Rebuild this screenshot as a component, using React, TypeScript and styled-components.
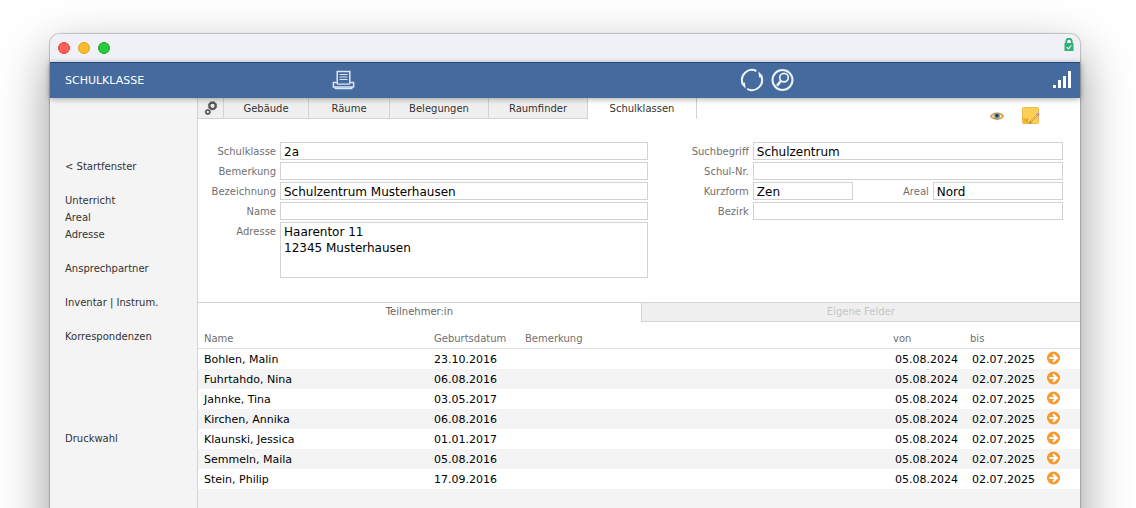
import React from "react";
import styled, { createGlobalStyle } from "styled-components";

const GlobalStyle = createGlobalStyle`
  *, *::before, *::after { box-sizing: border-box; }
  body {
    margin: 0;
    background: #fff;
    font-family: "DejaVu Sans", Verdana, sans-serif;
    font-size: 10px;
    color: #333;
  }
  button, input, textarea { font: inherit; color: inherit; }
  button { margin: 0; padding: 0; border: 0; background: none; cursor: pointer; }
  svg { display: block; }
`;

const line = "#d3d3d3";

const Desktop = styled.div`
  height: 100vh;
  padding: 34px 56px 0 50px;
  overflow: hidden;
`;

const Window = styled.div`
  display: flex;
  flex-direction: column;
  min-height: calc(100% + 60px);
  border-radius: 10px;
  background: #f4f4f4;
  box-shadow: 0 0 1px 1px rgba(0, 0, 0, 0.2), 0 20px 50px rgba(0, 0, 0, 0.42);
`;

const TitleBar = styled.div`
  display: flex;
  justify-content: space-between;
  align-items: flex-start;
  height: 28px;
  padding: 4px 6px 0 8px;
  border-radius: 10px 10px 0 0;
  background: #f0f1f6;
`;

const Lights = styled.div`
  display: flex;
  gap: 8px;
  padding-top: 4px;
`;

const Light = styled.button<{ $fill: string; $edge: string }>`
  width: 12px;
  height: 12px;
  border: 1px solid ${(p) => p.$edge};
  border-radius: 50%;
  background: ${(p) => p.$fill};
`;

const Header = styled.header`
  position: relative;
  display: flex;
  align-items: center;
  height: 36px;
  padding: 0 8px 2px 15px;
  border-top: 1px solid #24487c;
  background: #456a9d;
  box-shadow: 0 1px 6px rgba(0, 0, 0, 0.35);
`;

const Title = styled.h1`
  width: 267px;
  margin: 0;
  padding-top: 2px;
  font-size: 11px;
  font-weight: 400;
  color: #fff;
`;

const HeaderTools = styled.div`
  display: flex;
  align-items: center;
  gap: 6px;
  width: 332px;
  margin-left: auto;
`;

const IconButton = styled.button<{ $end?: boolean }>`
  margin-left: ${(p) => (p.$end ? "auto" : "0")};
`;

const Body = styled.div`
  flex: 1;
  display: flex;
`;

const Sidebar = styled.nav`
  flex: none;
  display: flex;
  flex-direction: column;
  gap: 17px;
  width: 148px;
  padding: 60px 0 60px 15px;
  border-right: 1px solid ${line};
`;

const NavGroup = styled.div<{ $apart?: boolean }>`
  display: flex;
  flex-direction: column;
  align-items: flex-start;
  padding-top: ${(p) => (p.$apart ? "68px" : "0")};
`;

const NavLink = styled.a`
  line-height: 17px;
  color: #333;
  text-decoration: none;
`;

const Main = styled.main`
  flex: 1;
  min-width: 0;
`;

const Sheet = styled.section`
  background: #fff;
`;

const TopRow = styled.div`
  display: flex;
  justify-content: space-between;
  align-items: flex-start;
  height: 44px;
`;

const Tabs = styled.div`
  display: flex;
`;

const Tab = styled.button<{ $width: number; $active?: boolean }>`
  display: flex;
  justify-content: center;
  align-items: center;
  width: ${(p) => p.$width}px;
  height: 21px;
  border-right: 1px solid ${line};
  border-bottom: 1px solid ${(p) => (p.$active ? "#fff" : line)};
  background: ${(p) => (p.$active ? "#fff" : "#efefef")};
`;

const Actions = styled.div`
  display: flex;
  align-items: center;
  gap: 18px;
  padding: 9px 40px 0 0;
`;

const Form = styled.form`
  display: grid;
  grid-template-columns: minmax(0, 13fr) minmax(0, 12fr);
  min-height: 160px;
  padding-right: 17px;
`;

const Fields = styled.div`
  display: flex;
  flex-direction: column;
  gap: 2px;
`;

const FieldRow = styled.div`
  display: flex;
  gap: 4px;
`;

const Label = styled.label<{ $width: number }>`
  flex: none;
  width: ${(p) => p.$width}px;
  height: 18px;
  line-height: 20px;
  text-align: right;
  color: #707070;
`;

const Input = styled.input<{ $width?: number }>`
  flex: ${(p) => (p.$width ? `0 0 ${p.$width}px` : "1 1 0")};
  min-width: 0;
  height: 18px;
  padding: 1px 3px 0;
  border: 1px solid ${line};
  background: #fff;
  font-size: 12px;
  color: #000;
`;

const TextArea = styled.textarea`
  flex: 1;
  min-width: 0;
  height: 56px;
  padding: 1px 3px;
  border: 1px solid ${line};
  background: #fff;
  font-size: 12px;
  line-height: 16px;
  color: #000;
  resize: none;
`;

const SubTabs = styled.div`
  display: flex;
  border-top: 1px solid ${line};
`;

const SubTab = styled.button<{ $active?: boolean }>`
  flex: ${(p) => (p.$active ? "101 1 0" : "100 1 0")};
  height: 19px;
  padding-bottom: ${(p) => (p.$active ? "2px" : "1px")};
  border: 0 solid ${line};
  border-width: ${(p) => (p.$active ? "0" : "0 0 1px 1px")};
  background: ${(p) => (p.$active ? "#fff" : "#efefef")};
  color: ${(p) => (p.$active ? "#666" : "#c6c6c6")};
`;

const Table = styled.table`
  width: 100%;
  table-layout: fixed;
  border-collapse: separate;
  border-spacing: 0;
`;

const Col = styled.col<{ $width?: number }>`
  width: ${(p) => (p.$width ? `${p.$width}px` : "auto")};
`;

const HeadCell = styled.th<{ $date?: boolean }>`
  height: 27px;
  padding: 7px 0 0 ${(p) => (p.$date ? "4px" : "6px")};
  border-bottom: 1px solid #e0e0e0;
  font-weight: 400;
  text-align: left;
  color: #707070;
`;

const Row = styled.tr`
  background: #fff;
  &:nth-child(even) { background: #f4f4f4; }
`;

const Cell = styled.td`
  height: 20px;
  padding: 2px 0 0 6px;
  font-size: 11px;
  line-height: 18px;
  color: #000;
`;

const IconCell = styled(Cell)`
  padding-top: 0;
  padding-bottom: 2px;
  line-height: 0;
`;

const LockIcon = () => (
  <svg width="10" height="14" viewBox="0 0 10 14" aria-label="Gesichert" role="img">
    <path d="M2.200 6V3.600a2.800 2.800 0 0 1 5.600 0V6" fill="none" stroke="#2fb075" strokeWidth="1.700" />
    <rect x="0.500" y="5" width="9" height="8" fill="#2fb075" />
    <path d="M2.800 9.200l1.600 1.700 3-3.400" fill="none" stroke="#fff" strokeWidth="1.100" />
  </svg>
);

const PrinterIcon = () => (
  <svg width="23" height="20" viewBox="0 0 23 20" fill="none" stroke="#dce6f3" strokeWidth="1.500">
    <path d="M5.200 13V1.500h12.600V13" />
    <path d="M7.500 4.500h8M7.500 7h8M7.500 9.500h8" strokeWidth="1.100" />
    <path d="M4.500 12.500H1.400v4.400h20.200v-4.400H18.500" />
    <path d="M4.500 12.700l1.300 1.400h11.400l1.300-1.400" strokeWidth="1.300" />
    <path d="M3.300 17v1.600h16.400V17" />
  </svg>
);

const RefreshIcon = () => (
  <svg width="24" height="24" viewBox="0 0 24 24" fill="none" stroke="#eef3fa" strokeWidth="2">
    <path d="M16.400 3A10 10 0 0 0 2.600 15.400" />
    <path d="M21 7.800A10 10 0 0 1 7.200 20.900" />
    <path d="M18.400 3.200l.6 6.400 4.200-1z" fill="#eef3fa" stroke="none" />
    <path d="M5.600 20.800l-.6-6.400-4.200 1z" fill="#eef3fa" stroke="none" />
  </svg>
);

const SearchIcon = () => (
  <svg width="24" height="24" viewBox="0 0 24 24" fill="none" stroke="#eef3fa">
    <circle cx="12.500" cy="12" r="10" strokeWidth="2" />
    <circle cx="14" cy="9.600" r="4.300" strokeWidth="1.700" />
    <path d="M11 12.800l-4 5" strokeWidth="2.500" />
  </svg>
);

const SignalIcon = () => (
  <svg width="20" height="18" viewBox="0 0 20 18" fill="#fff">
    <rect x="1" y="14" width="3" height="3" />
    <rect x="6" y="9" width="3" height="8" />
    <rect x="11" y="5" width="3" height="12" />
    <rect x="16" y="0" width="3" height="17" />
  </svg>
);

const GearsIcon = () => (
  <svg width="14" height="14" viewBox="0 0 14 14" fill="none" stroke="#555">
    <circle cx="8.500" cy="4.800" r="3.100" strokeWidth="2" />
    <circle cx="8.500" cy="4.800" r="4.200" strokeWidth="0.900" strokeDasharray="2.100 1.200" />
    <circle cx="3.800" cy="11" r="1.900" strokeWidth="1.500" />
    <circle cx="3.800" cy="11" r="2.600" strokeWidth="0.700" strokeDasharray="1.200 0.840" />
  </svg>
);

const EyeIcon = () => (
  <svg width="14" height="10" viewBox="0 0 14 10">
    <path d="M.7 5.200C3 1.400 10.600 1 13.300 5.200C10.800 9.200 3.200 9.200 .7 5.200Z" fill="#f3e2c4" stroke="#d69a48" strokeWidth="1.400" />
    <circle cx="7" cy="4.900" r="2.900" fill="#6f97a5" />
    <circle cx="7" cy="4.600" r="1.500" fill="#22323b" />
  </svg>
);

const NoteIcon = () => (
  <svg width="18" height="18" viewBox="0 0 18 18">
    <rect x="0.500" y="0.500" width="16" height="16" rx="1" fill="#fccf55" stroke="#ebb950" />
    <path d="M1 11.500l4.500-.5.5 5.500H1z" fill="#f6b933" />
    <path d="M1.500 11.500l4 4M5.500 11v5" stroke="#d99a27" strokeWidth="0.800" fill="none" />
    <path d="M6.600 17.200l1.400-3.200 1.800 1.600z" fill="#8a8078" />
    <path d="M8.800 14.700L15.400 8" stroke="#e98f4a" strokeWidth="2" />
    <path d="M9.200 14.100L15.400 7.600" stroke="#fbe3b8" strokeWidth="0.700" />
    <path d="M15 8.400l2-2" stroke="#b28bc6" strokeWidth="2.400" />
  </svg>
);

const ArrowIcon = () => (
  <svg width="13" height="14" viewBox="0 0 13 14">
    <circle cx="6.500" cy="7" r="6.500" fill="#f7992c" />
    <path d="M2.500 7h7M6 3.300L9.800 7l-3.800 3.700" fill="none" stroke="#fff" strokeWidth="2.100" />
  </svg>
);

const navigation = [
  ["< Startfenster"],
  ["Unterricht", "Areal", "Adresse"],
  ["Ansprechpartner"],
  ["Inventar | Instrum."],
  ["Korrespondenzen"],
  ["Druckwahl"],
];

const pupils = [
  ["Bohlen, Malin", "23.10.2016"],
  ["Fuhrtahdo, Nina", "06.08.2016"],
  ["Jahnke, Tina", "03.05.2017"],
  ["Kirchen, Annika", "06.08.2016"],
  ["Klaunski, Jessica", "01.01.2017"],
  ["Semmeln, Maila", "05.08.2016"],
  ["Stein, Philip", "17.09.2016"],
];

type FieldProps = { id: string; label: string; value?: string; labelWidth: number; width?: number };

const Field = ({ id, label, value = "", labelWidth, width }: FieldProps) => (
  <>
    <Label htmlFor={id} $width={labelWidth}>{label}</Label>
    <Input id={id} defaultValue={value} $width={width} />
  </>
);

export default function App() {
  return (
    <Desktop>
      <GlobalStyle />
      <Window>
        <TitleBar>
          <Lights>
            <Light $fill="#ff5f57" $edge="#e2463f" aria-label="Schließen" />
            <Light $fill="#febc2e" $edge="#e0a123" aria-label="Minimieren" />
            <Light $fill="#28c840" $edge="#1aab29" aria-label="Vergrößern" />
          </Lights>
          <LockIcon />
        </TitleBar>
        <Header>
          <Title>SCHULKLASSE</Title>
          <IconButton aria-label="Drucken"><PrinterIcon /></IconButton>
          <HeaderTools>
            <IconButton aria-label="Aktualisieren"><RefreshIcon /></IconButton>
            <IconButton aria-label="Suchen"><SearchIcon /></IconButton>
            <IconButton aria-label="Statistik" $end><SignalIcon /></IconButton>
          </HeaderTools>
        </Header>
        <Body>
          <Sidebar>
            {navigation.map((group) => (
              <NavGroup key={group[0]} $apart={group[0] === "Druckwahl"}>
                {group.map((item) => <NavLink key={item} href="#">{item}</NavLink>)}
              </NavGroup>
            ))}
          </Sidebar>
          <Main>
            <Sheet>
              <TopRow>
                <Tabs>
                  <Tab $width={26} aria-label="Einstellungen"><GearsIcon /></Tab>
                  <Tab $width={85}>Gebäude</Tab>
                  <Tab $width={81}>Räume</Tab>
                  <Tab $width={99}>Belegungen</Tab>
                  <Tab $width={99}>Raumfinder</Tab>
                  <Tab $width={109} $active>Schulklassen</Tab>
                </Tabs>
                <Actions>
                  <IconButton aria-label="Ansicht"><EyeIcon /></IconButton>
                  <IconButton aria-label="Notiz"><NoteIcon /></IconButton>
                </Actions>
              </TopRow>
              <Form>
                <Fields>
                  <FieldRow><Field id="klasse" label="Schulklasse" value="2a" labelWidth={78} /></FieldRow>
                  <FieldRow><Field id="bemerkung" label="Bemerkung" labelWidth={78} /></FieldRow>
                  <FieldRow><Field id="bezeichnung" label="Bezeichnung" value="Schulzentrum Musterhausen" labelWidth={78} /></FieldRow>
                  <FieldRow><Field id="name" label="Name" labelWidth={78} /></FieldRow>
                  <FieldRow>
                    <Label htmlFor="adresse" $width={78}>Adresse</Label>
                    <TextArea id="adresse" defaultValue={"Haarentor 11\n12345 Musterhausen"} />
                  </FieldRow>
                </Fields>
                <Fields>
                  <FieldRow><Field id="suchbegriff" label="Suchbegriff" value="Schulzentrum" labelWidth={101} /></FieldRow>
                  <FieldRow><Field id="schulnr" label="Schul-Nr." labelWidth={101} /></FieldRow>
                  <FieldRow>
                    <Field id="kurzform" label="Kurzform" value="Zen" labelWidth={101} width={100} />
                    <Field id="areal" label="Areal" value="Nord" labelWidth={72} />
                  </FieldRow>
                  <FieldRow><Field id="bezirk" label="Bezirk" labelWidth={101} /></FieldRow>
                </Fields>
              </Form>
              <SubTabs>
                <SubTab $active>Teilnehmer:in</SubTab>
                <SubTab>Eigene Felder</SubTab>
              </SubTabs>
              <Table>
                <colgroup>
                  <Col $width={230} />
                  <Col $width={91} />
                  <Col />
                  <Col $width={77} />
                  <Col $width={75} />
                  <Col $width={39} />
                </colgroup>
                <thead>
                  <tr>
                    <HeadCell>Name</HeadCell>
                    <HeadCell>Geburtsdatum</HeadCell>
                    <HeadCell>Bemerkung</HeadCell>
                    <HeadCell $date>von</HeadCell>
                    <HeadCell $date>bis</HeadCell>
                    <HeadCell aria-label="Öffnen" />
                  </tr>
                </thead>
                <tbody>
                  {pupils.map(([name, born]) => (
                    <Row key={name}>
                      <Cell>{name}</Cell>
                      <Cell>{born}</Cell>
                      <Cell />
                      <Cell>05.08.2024</Cell>
                      <Cell>02.07.2025</Cell>
                      <IconCell>
                        <IconButton aria-label={`${name} öffnen`}><ArrowIcon /></IconButton>
                      </IconCell>
                    </Row>
                  ))}
                </tbody>
              </Table>
            </Sheet>
          </Main>
        </Body>
      </Window>
    </Desktop>
  );
}
